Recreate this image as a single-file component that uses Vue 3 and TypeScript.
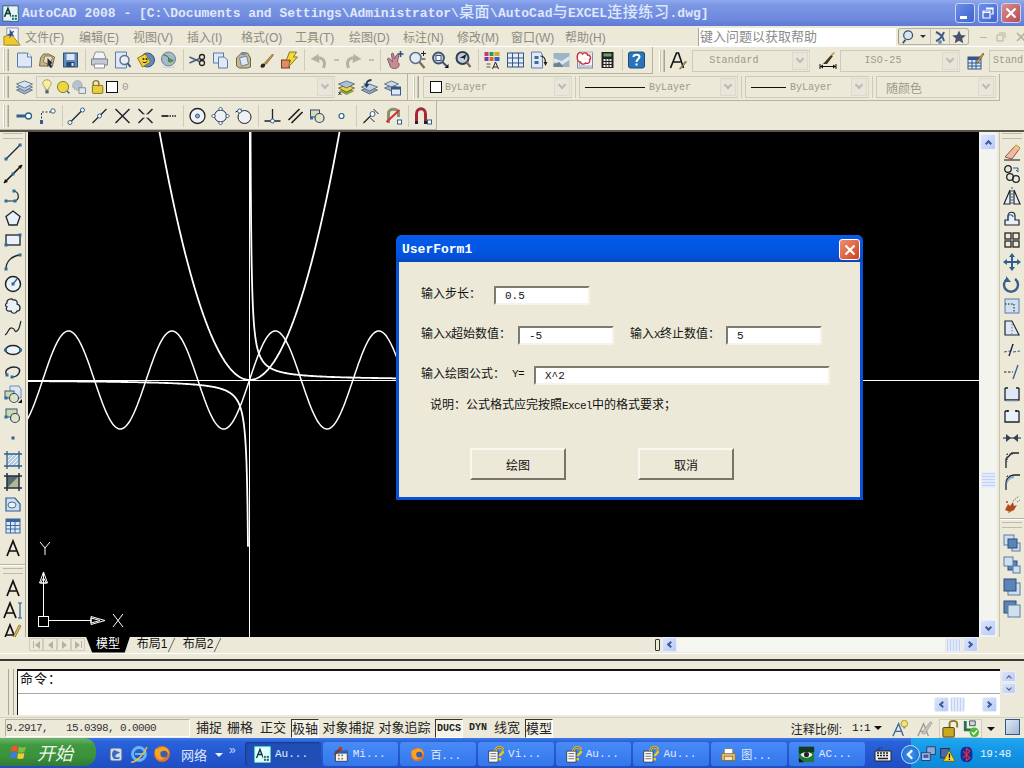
<template>
  <div class="app">
    <!-- 标题栏 -->
    <div class="titlebar">
      <svg class="ico app-ico" viewBox="0 0 20 20" v-html="icons.acad"></svg>
      <div class="title-text">AutoCAD 2008 - [C:\Documents and Settings\Administrator\<span class="cjk">桌面</span>\AutoCad<span class="cjk">与</span>EXCEL<span class="cjk">连接练习</span>.dwg]</div>
      <div class="win-btns">
        <div class="win-btn"><i class="glyph-min"></i></div>
        <div class="win-btn"><svg viewBox="0 0 16 16" width="16" height="16"><path d="M6 3h7v6h-2M3 6h7v7H3zM3 7.500h7M6 4h7" fill="none" stroke="#fff" stroke-width="1.200"/></svg></div>
        <div class="win-btn close"><svg viewBox="0 0 16 16" width="16" height="16"><path d="M3.500 3.500l9 9M12.500 3.500l-9 9" stroke="#fff" stroke-width="2.200"/></svg></div>
      </div>
    </div>

    <!-- 菜单栏 -->
    <div class="menubar">
      <svg class="ico menu-ico" viewBox="0 0 20 20" v-html="icons.docIcon"></svg>
      <span v-for="m in menus" :key="m" class="menu-item">{{ m }}</span>
      <div class="help-box">键入问题以获取帮助</div>
      <div class="help-tools">
        <svg viewBox="0 0 20 18" width="18" height="16"><circle cx="9" cy="7" r="5" fill="#dbe6f2" stroke="#39526f" stroke-width="1.400"/><path d="M6 12l-3 4" stroke="#39526f" stroke-width="2"/></svg>
        <span class="mini-drop"></span>
        <span class="help-div"></span>
        <svg viewBox="0 0 16 16" width="16" height="16"><path d="M4 3c5 2 7 5 8 9M4 12c3-1 6-4 8-9" fill="none" stroke="#3c5a84" stroke-width="2"/><circle cx="8" cy="13" r="2" fill="#7a8fae"/></svg>
        <span class="help-div"></span>
        <svg viewBox="0 0 16 16" width="16" height="16"><path d="M8 1.500l2 4.500 4.800.4-3.600 3.200 1.100 4.700L8 11.800l-4.300 2.500 1.100-4.700L1.200 6.400 6 6z" fill="#46536f"/></svg>
      </div>
      <div class="mdi-btns">
        <span>–</span>
        <svg viewBox="0 0 12 12" width="12" height="12"><path d="M4 2h6v5M2 4h6v6H2z" fill="none" stroke="#b5b2a3"/></svg>
        <svg viewBox="0 0 12 12" width="12" height="12"><path d="M2 2l8 8M10 2l-8 8" stroke="#b5b2a3" stroke-width="1.600"/></svg>
      </div>
    </div>

    <!-- 第一行工具栏 -->
    <div class="tool-row first">
      <div class="toolbar">
        <span class="grip"></span>
        <template v-for="(t, i) in row1" :key="i">
          <span v-if="t === 'sep'" class="sep"></span>
          <span v-else-if="t === 'drop'" class="tool-drop"></span>
          <svg v-else class="ico tool" viewBox="0 0 20 20" v-html="icons[t]"></svg>
        </template>
      </div>
      <div class="toolbar style-bar">
        <span class="grip"></span>
        <svg class="ico tool text-style" viewBox="0 0 20 20" v-html="icons.textStyle"></svg>
        <div class="combo w118 spaced"><span class="combo-label center">Standard</span><span class="combo-btn"></span></div>
        <svg class="ico tool dim" viewBox="0 0 20 20" v-html="icons.dimStyle"></svg>
        <div class="combo w120 spaced"><span class="combo-label center">ISO-25</span><span class="combo-btn"></span></div>
        <svg class="ico tool dim2" viewBox="0 0 20 20" v-html="icons.tableStyle"></svg>
        <div class="combo last"><span class="combo-label">Stand</span></div>
      </div>
    </div>

    <!-- 第二行工具栏 -->
    <div class="tool-row second">
      <div class="toolbar layer-bar">
        <span class="grip"></span>
        <svg class="ico tool" viewBox="0 0 20 20" v-html="icons.layers"></svg>
        <div class="combo layer-combo">
          <svg class="ico layer-ico" viewBox="0 0 20 20" v-html="icons.bulb"></svg>
          <svg class="ico layer-ico" viewBox="0 0 20 20" v-html="icons.sun"></svg>
          <svg class="ico layer-ico" viewBox="0 0 20 20" v-html="icons.freeze"></svg>
          <svg class="ico layer-ico lock" viewBox="0 0 20 20" v-html="icons.padlock"></svg>
          <span class="swatch"></span>
          <span class="combo-label layer-name">0</span>
          <span class="combo-btn"></span>
        </div>
        <svg class="ico tool" viewBox="0 0 20 20" v-html="icons.layerMake"></svg>
        <svg class="ico tool" viewBox="0 0 20 20" v-html="icons.layerPrev"></svg>
        <svg class="ico tool" viewBox="0 0 20 20" v-html="icons.layerState"></svg>
      </div>
      <div class="toolbar prop-bar">
        <span class="grip"></span>
        <div class="combo w149"><span class="swatch small"></span><span class="combo-label">ByLayer</span><span class="combo-btn"></span></div>
        <span class="bar-gap"></span>
        <div class="combo w159"><span class="ltype long"></span><span class="combo-label">ByLayer</span><span class="combo-btn"></span></div>
        <span class="bar-gap"></span>
        <div class="combo w124"><span class="ltype short"></span><span class="combo-label">ByLayer</span><span class="combo-btn"></span></div>
        <span class="bar-gap"></span>
        <div class="combo w120"><span class="combo-label cn">随颜色</span><span class="combo-btn"></span></div>
      </div>
    </div>

    <!-- 第三行工具栏 -->
    <div class="tool-row third">
      <div class="toolbar">
        <span class="grip"></span>
        <template v-for="(t, i) in row3" :key="i">
          <span v-if="t === 'sep'" class="sep"></span>
          <svg v-else class="ico tool" viewBox="0 0 20 20" v-html="icons[t]"></svg>
        </template>
      </div>
    </div>

    <!-- 绘图区 -->
    <div class="main">
      <div class="side left-side">
        <span class="grip-h"></span>
        <svg v-for="t in leftTools" :key="t" class="ico side-tool" viewBox="0 0 20 20" v-html="icons[t]"></svg>
        <span class="side-div"></span>
        <span class="grip-h text-grip"></span>
        <svg v-for="t in textTools" :key="t" class="ico side-tool" viewBox="0 0 20 20" v-html="icons[t]"></svg>
      </div>

      <div class="canvas">
        <svg class="drawing" width="951" height="505" viewBox="0 0 951 505">
          <path d="M0 248.500H951M221.500 0V505" stroke="#fff" fill="none"/>
          <path :d="sinePath" stroke="#fff" stroke-width="1.500" fill="none"/>
          <path :d="squarePath" stroke="#fff" stroke-width="1.800" fill="none"/>
          <path :d="hyperRight" stroke="#fff" stroke-width="1.800" fill="none"/>
          <path :d="hyperLeft" stroke="#fff" stroke-width="1.800" fill="none"/>
          <!-- UCS -->
          <g stroke="#fff" fill="none">
            <rect x="10.500" y="484.500" width="10" height="10"/>
            <path d="M15.500 484V440M21 488.500H63M15.500 440l-4 11h8zM15.500 446l-3 5h6zM63 484.500l14 4-14 4zM63 486l9 2.500-9 2.500z"/>
            <path d="M85 482l10 13M95 482l-10 13M12 410l5 6 5-6M17 416v7"/>
          </g>
        </svg>

        <div class="dialog">
          <div class="dlg-title">
            <span>UserForm1</span>
            <div class="dlg-close"><svg viewBox="0 0 16 16" width="16" height="16"><path d="M3.500 3.500l9 9M12.500 3.500l-9 9" stroke="#fff" stroke-width="2.200"/></svg></div>
          </div>
          <div class="dlg-body">
            <div class="dlg-row r1">
              <label class="l1">输入步长：</label>
              <div class="field w96">0.5</div>
            </div>
            <div class="dlg-row r2">
              <label class="l2">输入<span class="en">X</span>超始数值：</label>
              <div class="field w96">-5</div>
              <label class="l3">输入<span class="en">X</span>终止数值：</label>
              <div class="field w96">5</div>
            </div>
            <div class="dlg-row r3">
              <label class="l4">输入绘图公式：</label>
              <label class="ylab">Y=</label>
              <div class="field w296">X^2</div>
            </div>
            <div class="note">说明：公式格式应完按照<span class="en">Excel</span>中的格式要求；</div>
            <div class="dlg-actions">
              <button class="dlg-btn">绘图</button>
              <button class="dlg-btn">取消</button>
            </div>
          </div>
        </div>
      </div>

      <div class="v-scroll">
        <span class="sb-btn"><i class="chev up"></i></span>
        <span class="sb-thumb-wrap"><span class="sb-thumb"></span></span>
        <span class="sb-btn"><i class="chev down"></i></span>
      </div>

      <div class="side right-side">
        <span class="grip-h"></span>
        <svg v-for="t in modifyTools" :key="t" class="ico side-tool" viewBox="0 0 20 20" v-html="icons[t]"></svg>
        <span class="side-div right-div"></span>
        <span class="grip-h order-grip"></span>
        <svg v-for="t in orderTools" :key="t" class="ico side-tool" viewBox="0 0 20 20" v-html="icons[t]"></svg>
      </div>
    </div>

    <!-- 布局标签 -->
    <div class="tabs-row">
      <div class="tab-nav">
        <span><b></b><i class="tri-l"></i></span>
        <span><i class="tri-l"></i></span>
        <span><i class="tri-r"></i></span>
        <span><i class="tri-r"></i><b></b></span>
      </div>
      <div class="tab active">模型</div>
      <div class="tab">布局1</div>
      <div class="tab">布局2</div>
      <span class="h-split"></span>
      <div class="h-scroll">
        <span class="sb-btn small"><i class="chev left"></i></span>
        <span class="h-track"></span>
        <span class="sb-thumb h"></span>
        <span class="sb-btn small"><i class="chev right"></i></span>
      </div>
    </div>

    <!-- 命令行 -->
    <div class="cmd-area">
      <span class="cmd-grip"></span>
      <div class="cmd-box">
        <div class="cmd-top">命令：</div>
        <div class="cmd-bottom">
          <span class="sb-btn small"><i class="chev left"></i></span>
          <span class="sb-thumb h"></span>
          <span class="cmd-hgap"></span>
          <span class="sb-btn small"><i class="chev right"></i></span>
        </div>
      </div>
      <div class="cmd-vbtns">
        <span class="sb-btn tiny"><i class="chev up"></i></span>
        <span class="sb-btn tiny"><i class="chev down"></i></span>
      </div>
    </div>

    <!-- 状态栏 -->
    <div class="statusbar">
      <div class="coords">9.2917,&nbsp;&nbsp;&nbsp;15.0398,&nbsp;0.0000</div>
      <span v-for="b in statusBtns" :key="b.t" class="st-btn" :class="{ on: b.on, latin: b.latin }" :style="{ width: b.w + 'px', marginLeft: b.m + 'px' }">{{ b.t }}</span>
      <div class="st-right">
        <span class="scale-label">注释比例:</span>
        <span class="scale-val">1:1</span>
        <i class="caret"></i>
        <svg class="ico st-ico vis" viewBox="0 0 20 20" v-html="icons.annoOn"></svg>
        <svg class="ico st-ico auto" viewBox="0 0 20 20" v-html="icons.annoOff"></svg>
        <div class="st-tray">
          <svg class="ico st-ico" viewBox="0 0 20 20" v-html="icons.unlock"></svg>
          <svg class="ico st-ico" viewBox="0 0 20 20" v-html="icons.comm"></svg>
        </div>
        <i class="caret dark"></i>
        <span class="clean-screen"></span>
      </div>
    </div>

    <!-- 任务栏 -->
    <div class="taskbar">
      <div class="start">
        <svg viewBox="0 0 20 20" width="18" height="18"><path d="M2 4c3-2 5-1 7 0l-1 6c-2-1-4-2-7 0z" fill="#e8562a"/><path d="M10 4c2 1 4 2 8 0l-2 6c-3 1-5 1-7 0z" fill="#7fbf3f"/><path d="M1 11c3-2 5-1 7 0l-1 6c-2-1-4-1-7 0z" fill="#3e7de0"/><path d="M9 11c2 1 4 1 7 0l-1 6c-3 1-5 1-7 0z" fill="#f5c92f"/></svg>
        <span>开始</span>
      </div>
      <div class="quick">
        <svg class="ico q" viewBox="0 0 20 20" v-html="icons.qDesk"></svg>
        <svg class="ico q" viewBox="0 0 20 20" v-html="icons.ie"></svg>
        <svg class="ico q" viewBox="0 0 20 20" v-html="icons.firefox"></svg>
        <span class="net">网络</span>
        <i class="net-caret"></i>
        <span class="more">»</span>
      </div>
      <div class="tasks">
        <div v-for="(t, i) in tasks" :key="i" class="task" :class="{ active: t.active }">
          <svg class="ico task-ico" viewBox="0 0 20 20" v-html="icons[t.icon]"></svg>
          <span>{{ t.label }}</span>
        </div>
      </div>
      <svg class="ico kbd" viewBox="0 0 20 20" v-html="icons.keyboard"></svg>
      <div class="tray">
        <span class="tray-chev"><i class="chev left white"></i></span>
        <svg class="ico tray-ico" viewBox="0 0 20 20" v-html="icons.netTray"></svg>
        <svg class="ico tray-ico" viewBox="0 0 20 20" v-html="icons.warnTray"></svg>
        <svg class="ico tray-ico" viewBox="0 0 20 20" v-html="icons.bluetooth"></svg>
        <span class="clock">19:48</span>
      </div>
    </div>
  </div>
</template>

<script setup lang="ts">
const menus = ['文件(F)', '编辑(E)', '视图(V)', '插入(I)', '格式(O)', '工具(T)', '绘图(D)', '标注(N)', '修改(M)', '窗口(W)', '帮助(H)'];

const row1 = ['new', 'open', 'save', 'sep', 'print', 'preview', 'publish', 'globe', 'sep', 'cut', 'copy', 'paste', 'brush', 'blockEdit', 'sep', 'undo', 'drop', 'redo', 'drop', 'sep', 'pan', 'zoomRt', 'zoomWin', 'zoomPrev', 'sep', 'props', 'design', 'sheet', 'markup', 'cloudRed', 'calc', 'sep', 'help'];
const row3 = ['snapFrom', 'snapTrack', 'sep', 'endpoint', 'midpoint', 'inter', 'appInter', 'extension', 'sep', 'center', 'quadrant', 'tangent', 'sep', 'perp', 'parallel', 'insertSnap', 'node', 'sep', 'nearest', 'noSnap', 'sep', 'magnet'];
const leftTools = ['line', 'xline', 'pline', 'polygon', 'rect', 'arc', 'circle', 'revcloud', 'spline', 'ellipse', 'ellipseArc', 'insert', 'block', 'point', 'hatch', 'gradient', 'region', 'table', 'mtext'];
const textTools = ['bigA', 'textA', 'editA', 'abc'];
const modifyTools = ['erase', 'copyObj', 'mirror', 'offset', 'array', 'move', 'rotate', 'scale', 'stretch', 'trim', 'extend', 'breakPt', 'breakObj', 'join', 'chamfer', 'fillet', 'explode'];
const orderTools = ['orderFront', 'orderBack', 'orderAbove', 'orderUnder'];

const statusBtns = [
  { t: '捕捉', w: 28, m: 0 }, { t: '栅格', w: 28, m: 3 }, { t: '正交', w: 28, m: 5 }, { t: '极轴', w: 28, m: 4, on: true },
  { t: '对象捕捉', w: 53, m: 3 }, { t: '对象追踪', w: 53, m: 3 }, { t: 'DUCS', w: 28, m: 4, on: true, latin: true },
  { t: 'DYN', w: 24, m: 3, latin: true }, { t: '线宽', w: 28, m: 3 }, { t: '模型', w: 28, m: 4, on: true },
];

const tasks = [
  { icon: 'acadTask', label: 'Au...', active: true },
  { icon: 'excelTask', label: 'Mi...' },
  { icon: 'firefox', label: '百...' },
  { icon: 'noteHelp', label: 'Vi...' },
  { icon: 'noteHelp', label: 'Au...' },
  { icon: 'noteHelp', label: 'Au...' },
  { icon: 'printTask', label: '图...' },
  { icon: 'eyeTask', label: 'AC...' },
];

// 曲线：原点在 (221.5, 248)
const ox = 221.5;
const oy = 248;

function toPath(pts: number[][]) {
  return 'M' + pts.map((p) => p[0].toFixed(1) + ' ' + p[1].toFixed(1)).join('L');
}
function sample(from: number, to: number, step: number, fn: (x: number) => number) {
  const pts: number[][] = [];
  for (let x = from; x <= to; x += step) pts.push([ox + x, oy - fn(x)]);
  return pts;
}

const sinePath = toPath(sample(-222, 200, 1, (x) => 49 * Math.sin((x * 2 * Math.PI) / 103.4)));
const squarePath = toPath(sample(-92, 92, 1, (x) => 0.0306 * x * x));
const hyperRight = toPath(sample(0.7, 200, 0.3, (x) => 250 / x));
const hyperLeft = toPath(sample(-222, -1.5, 0.5, (x) => 250 / x));

const nd = (x: number, y: number) => `<rect x="${x - 1.5}" y="${y - 1.5}" width="3" height="3" fill="#2b6f9e"/>`;
const dk = '#1d2430';
const bl = '#2e5f8e';
const page = 'fill="#dfe9f5" stroke="#5b7ca8"';
const sq = 'fill="#5b83b5" stroke="#2d4f7c"';
const sq2 = 'fill="#dbe7f3" stroke="#6b8aae"';

const icons: Record<string, string> = {
  acad: `<rect x="1" y="1" width="18" height="18" fill="#e8f2f2" stroke="#1c5d5d"/><path d="M3 14L7 4l4 10M4.500 10h5" fill="none" stroke="#0b3d3d" stroke-width="1.800"/><rect x="11" y="11" width="7" height="7" fill="#0f6d6d" stroke="#fff"/><path d="M14.500 11v7M11 14.500h7" stroke="#fff"/>`,
  acadTask: `<rect x="1" y="1" width="18" height="18" fill="#dff" stroke="#8fd"/><path d="M3 14L7 4l4 10M4.500 10h5" fill="none" stroke="#0b3d3d" stroke-width="1.600"/><rect x="11" y="11" width="7" height="7" fill="#0f6d6d" stroke="#fff"/><path d="M14.500 11v7M11 14.500h7" stroke="#fff"/>`,
  docIcon: `<path d="M4 1h12v18H4z" fill="#f4f6fb" stroke="#8a93a8"/><path d="M1 19V10l8-2 9 11z" fill="#f1c92e" stroke="#a88a12"/><path d="M7 2l2 3 3-1-2 3 2 3-3-1-2 3V9L4 8l3-1z" fill="#2c4f9a"/>`,
  new: `<path d="M3 3h10l4 4v10H3z" ${page}/><path d="M13 3v4h4" fill="#fff" stroke="#5b7ca8"/>`,
  open: `<path d="M2 16l1-8 3-4h5l6 3-2 9z" fill="#c9b48a" stroke="#7a6a48"/><path d="M7 6h6l2 2-3 7-6-3z" fill="#e9dfc2" stroke="#8a7a58"/><path d="M10 8l5 5-2 1 2 3-2 1-2-3-1 2z" fill="#23303f"/>`,
  save: `<rect x="3" y="3" width="14" height="14" fill="#5f8ab9" stroke="#2e5482"/><rect x="6" y="4" width="8" height="6" fill="#dce8f5"/><rect x="6" y="12" width="8" height="5" fill="#24456f"/><rect x="11" y="13" width="2" height="3" fill="#dce8f5"/>`,
  print: `<path d="M6 2h8l2 5v2H4V7z" fill="#f2f3f6" stroke="#8a909c"/><path d="M2 9h16v6H2z" fill="#c5c9d2" stroke="#7c828e"/><path d="M5 14h10v4H5z" fill="#fff" stroke="#8a909c"/>`,
  preview: `<path d="M3 2h11v16H3z" ${page}/><circle cx="12" cy="10" r="4.500" fill="#e9eef6" stroke="#5a6f8e" stroke-width="1.400"/><path d="M15 13l3 4" stroke="#3d5372" stroke-width="2"/>`,
  publish: `<circle cx="12" cy="10" r="7" fill="#5f8ab9" stroke="#2e5482"/><path d="M2 8l8-4 5 8-8 5z" fill="#f2d33a" stroke="#8a7512"/><circle cx="8" cy="9" r="1" fill="#222"/><circle cx="11" cy="9" r="1" fill="#222"/><path d="M7 12c2 1 3 1 5-1" stroke="#222" fill="none"/>`,
  globe: `<circle cx="10" cy="9" r="7" fill="#a9b8c9" stroke="#6f8095"/><path d="M5 5c3 0 6 2 5 5s4 2 5 0" fill="#4f9a50" stroke="#3d7a40"/><path d="M3 15c5 3 10 3 14 0l-2 3H5z" fill="#cfd4da"/>`,
  cut: `<circle cx="14.500" cy="7" r="2.500" fill="none" stroke="#222" stroke-width="1.300"/><circle cx="14.500" cy="13" r="2.500" fill="none" stroke="#222" stroke-width="1.300"/><path d="M2 7l10 4.500M2 13l10-4.500" stroke="#4a5f78" stroke-width="1.500"/>`,
  copy: `<rect x="3" y="3" width="10" height="10" ${page}/><path d="M8 7h6l3 3v8H8z" ${page}/>`,
  paste: `<path d="M3 8l5-5h6l3 5v9l-3 1H6l-3-2z" fill="#c4b98f" stroke="#6d6445"/><path d="M6 8l7-2 2 8-7 2z" fill="#dfe9f5" stroke="#6a85a8"/><rect x="8" y="2" width="4" height="3" fill="#6d8aa6"/>`,
  brush: `<path d="M4 17c0-4 3-4 5-3l-1 3c-1 1-3 1-4 0z" fill="#2d2416"/><path d="M8 13l8-9 1 1-7 9z" fill="#c99644" stroke="#6e5220" stroke-width=".6"/>`,
  blockEdit: `<rect x="2" y="10" width="8" height="8" fill="#e08a68" stroke="#7a3a20"/><path d="M10 2h7l-3 5h4l-9 10 2-7H7z" fill="#f5d93a" stroke="#8a7a18"/>`,
  undo: `<path d="M15 18c3-8-2-12-8-9" fill="none" stroke="#b5b2a3" stroke-width="3"/><path d="M2 9l8-5 1 9z" fill="#b5b2a3"/>`,
  redo: `<path d="M5 18c-3-8 2-12 8-9" fill="none" stroke="#b5b2a3" stroke-width="3"/><path d="M18 9l-8-5-1 9z" fill="#b5b2a3"/>`,
  pan: `<path d="M3 9c1-2 3 0 5 3l-1-8c0-1 2-1 2 0l1 5 2-4c1-1 2 0 2 1l-1 6c2 1 2 3 1 5-2 2-6 2-8 0z" fill="#c98a96" stroke="#7a5a66"/><path d="M16 1v6M13 4h6" stroke="#2a4f80" stroke-width="1.600"/>`,
  zoomRt: `<circle cx="8" cy="8" r="5.500" fill="#e2eaf4" stroke="#5a6f8e" stroke-width="1.500"/><path d="M12 12l5 6" stroke="#7a6a48" stroke-width="2.200"/><path d="M16 1v5M13.500 3.500h5M14 9h4" stroke="#222"/>`,
  zoomWin: `<circle cx="8" cy="8" r="5.500" fill="#c8d4e2" stroke="#3d5372" stroke-width="1.800"/><rect x="5.500" y="5.500" width="5" height="5" fill="#fff" stroke="#3d5372"/><path d="M12 12l4 4" stroke="#3d5372" stroke-width="2"/><path d="M14 18h4v-4z" fill="#111"/>`,
  zoomPrev: `<circle cx="9" cy="8" r="6" fill="#c3ccd8" stroke="#2e3f58" stroke-width="2"/><path d="M6 8l7-4-2 6-1-2z" fill="#222"/><path d="M13 12l4 5" stroke="#7a6a48" stroke-width="2.200"/>`,
  props: `<rect x="2" y="2" width="4" height="4" fill="#d22f8a"/><rect x="7" y="2" width="4" height="4" fill="#22a050"/><rect x="12" y="2" width="5" height="4" fill="#d2a82f"/><rect x="2" y="7" width="4" height="4" fill="#6f3fa8"/><rect x="7" y="7" width="4" height="4" fill="#e2622f"/><rect x="12" y="7" width="5" height="4" fill="#2f5fd2"/><path d="M4 14h4M4 17h4" stroke="#555"/><path d="M10 19l3-7 3 7M11 17h4" fill="none" stroke="#222"/>`,
  design: `<rect x="2" y="3" width="16" height="14" fill="#e4ecf6" stroke="#33578a"/><path d="M7 3v14M13 3v14M2 8h16M2 13h16" stroke="#33578a"/>`,
  sheet: `<path d="M3 2h9l2 3v13H3z" ${page}/><path d="M6 6h4v3H6zM6 11h4v3H6z" fill="#41699b"/><path d="M12 6c4 0 5 3 5 7" fill="none" stroke="#222" stroke-width="1.200"/><path d="M15 12h4l-2 4z" fill="#222"/>`,
  markup: `<rect x="2" y="3" width="16" height="14" fill="#9fb3c4"/><path d="M2 8l8 3 8-5v4l-8 5-8-3z" fill="#dfe7ee"/><path d="M2 14l6-2 4 5H2z" fill="#6a8296"/>`,
  cloudRed: `<rect x="3" y="4" width="15" height="14" fill="#dfe5ee" stroke="#7e8da2"/><rect x="5" y="2" width="13" height="14" fill="#fff" stroke="#7e8da2" opacity=".6"/><path d="M3 5c1-3 4-3 5-1 2-2 5-1 5 1 3 0 4 3 2 5 1 3-2 4-4 3-2 2-5 1-5-1-3 0-4-4-3-7z" fill="#fff" stroke="#cf2a3c" stroke-width="1.400"/>`,
  calc: `<rect x="4" y="2" width="12" height="16" fill="#222"/><rect x="6" y="3.500" width="8" height="3" fill="#6aa06a"/><path d="M6 9h2v2H6zM9 9h2v2H9zM12 9h2v2h-2zM6 12h2v2H6zM9 12h2v2H9zM12 12h2v2h-2zM6 15h2v2H6zM9 15h2v2H9zM12 15h2v2h-2z" fill="#eee"/>`,
  help: `<rect x="2" y="2" width="16" height="16" rx="2" fill="#2b74b8" stroke="#1a4a80"/><path d="M7 7c0-3 6-3 6 0 0 2-3 2-3 5" fill="none" stroke="#fff" stroke-width="2"/><rect x="9" y="13.500" width="2" height="2" fill="#fff"/>`,
  textStyle: `<path d="M2 17L8 2h2l5 15M5 11h7" fill="none" stroke="#111" stroke-width="1.600"/><path d="M11 18l6-8 1 1-6 7z" fill="#c9a148" stroke="#5d4a1c" stroke-width=".6"/>`,
  dimStyle: `<path d="M2 13v5M18 13v5M2 15.500h16" stroke="#111"/><path d="M2 15.500l3-2v4zM18 15.500l-3-2v4z" fill="#111"/><path d="M5 13l8-9 2 1-6 8z" fill="#44371c"/><path d="M13 3l3-2 1 1-3 3z" fill="#c9a148"/>`,
  tableStyle: `<rect x="2" y="6" width="13" height="12" fill="#dfe9f5" stroke="#33578a"/><rect x="2" y="6" width="13" height="3" fill="#33578a"/><path d="M6 9v9M10 9v9M2 12h13M2 15h13" stroke="#33578a"/><path d="M10 11l7-9 1 1-6 9z" fill="#c9a148" stroke="#5d4a1c" stroke-width=".6"/>`,
  layers: `<path d="M10 10l8 3-8 4-8-4z" fill="#9fb0c4" stroke="#6b7d94"/><path d="M10 7l8 3-8 4-8-4z" fill="#b9c8d9" stroke="#6b7d94"/><path d="M10 4l8 3-8 4-8-4z" fill="#dae4ef" stroke="#6b7d94"/>`,
  bulb: `<path d="M10 1c4 0 6 3 5 6-1 2-3 3-3 6H8c0-3-2-4-3-6-1-3 1-6 5-6z" fill="#f7ef9e" stroke="#8f8a50"/><rect x="8" y="14" width="4" height="4" fill="#4a5f78"/>`,
  sun: `<circle cx="10" cy="10" r="7" fill="#ecd83e" stroke="#6b6e20"/><path d="M15 15l3 3" stroke="#4a6a8e" stroke-width="2"/>`,
  freeze: `<circle cx="8" cy="8" r="6" fill="#b5c2cc" stroke="#8a98a4" stroke-dasharray="2 1"/><rect x="10" y="11" width="8" height="7" fill="#dfe7ee" stroke="#6f7f8f"/>`,
  padlock: `<path d="M4 9V5c0-4 7-4 7 0v4" fill="none" stroke="#8e7a20" stroke-width="1.800"/><rect x="3" y="8" width="13" height="10" rx="1" fill="#e8cf3a" stroke="#6f5f18"/>`,
  layerMake: `<path d="M10 11l8 3-8 4-8-4z" fill="#7fa04a"/><path d="M10 8l8 3-8 4-8-4z" fill="#f1d33a" stroke="#7a6f20"/><path d="M10 4l8 3-8 4-8-4z" fill="#a8c0d8" stroke="#5f7488"/><path d="M2 15l3 3M2 18l2-3" stroke="#222"/>`,
  layerPrev: `<path d="M10 10l8 3-8 4-8-4z" fill="#8fa2b6" stroke="#5f7488"/><path d="M10 7l8 3-8 4-8-4z" fill="#c0cfdd" stroke="#5f7488"/><path d="M12 2c-4 0-6 3-6 5l-2-1 3 5 3-4-2 0c0-2 2-3 4-3z" fill="#1f3c5f"/>`,
  layerState: `<path d="M9 8l7 3-7 3-7-3z" fill="#9fb0c4" stroke="#5f7488"/><path d="M9 4l7 3-7 3-7-3z" fill="#cdd9e5" stroke="#5f7488"/><rect x="9" y="10" width="9" height="8" fill="#dfe9f5" stroke="#33578a"/><rect x="9" y="10" width="9" height="2.500" fill="#33578a"/>`,
  snapFrom: `<path d="M2 10h9" stroke="#2e5f8e" stroke-width="3"/><circle cx="14" cy="10" r="3" fill="#fff" stroke="#2e5f8e" stroke-width="1.300"/>`,
  snapTrack: `<path d="M4 16V6h10" fill="none" stroke="#333" stroke-dasharray="2 1.500"/><rect x="2.500" y="14" width="3" height="4" fill="#2e5f8e"/><circle cx="15.500" cy="5" r="2.200" fill="#fff" stroke="#2e5f8e"/>`,
  endpoint: `<path d="M4 16L15 5" stroke="${dk}" stroke-width="1.300"/><circle cx="3.500" cy="16.500" r="2" fill="#fff" stroke="${bl}"/><circle cx="16" cy="4" r="2" fill="#fff" stroke="${bl}"/>`,
  midpoint: `<path d="M3 17L17 3" stroke="${dk}" stroke-width="1.300"/><circle cx="10" cy="10" r="2" fill="#fff" stroke="${bl}"/>`,
  inter: `<path d="M3 3l14 14M17 3L3 17" stroke="${dk}" stroke-width="1.500"/>`,
  appInter: `<path d="M3 3l5 5M12 12l5 5M17 3l-5 5M8 12l-5 5" stroke="${dk}" stroke-width="1.500"/><path d="M8 8h1M11 8h1M8 12h1M11 12h1" stroke="${dk}"/>`,
  extension: `<path d="M3 10h7" stroke="#222" stroke-width="1.800"/><path d="M11 10h7" stroke="#222" stroke-dasharray="1.500 1" stroke-width="1.400"/>`,
  center: `<circle cx="10" cy="10" r="7.500" fill="#eef2f7" stroke="#222" stroke-width="1.300"/><circle cx="10" cy="10" r="2" fill="#8fb0d0" stroke="#2e5f8e"/>`,
  quadrant: `<circle cx="10" cy="10" r="6" fill="#eef2f7" stroke="#222"/><path d="M10 1l2 2-2 2-2-2zM10 15l2 2-2 2-2-2zM1 10l2-2 2 2-2 2zM15 10l2-2 2 2-2 2z" fill="#fff" stroke="#2e5f8e"/>`,
  tangent: `<circle cx="11" cy="11" r="6.500" fill="#eef2f7" stroke="#222"/><path d="M2 6l6-3" stroke="#222"/><circle cx="6" cy="5" r="2" fill="#fff" stroke="#2e5f8e"/>`,
  perp: `<path d="M2 15h16M10 3v12" stroke="#222" stroke-width="1.300"/><circle cx="10" cy="15" r="2" fill="#fff" stroke="#2e5f8e"/>`,
  parallel: `<path d="M3 14L14 3M6 17L17 6" stroke="#222" stroke-width="1.700"/>`,
  insertSnap: `<rect x="2" y="4" width="9" height="7" fill="#cfe0b8" stroke="#446"/><circle cx="11" cy="12" r="4.500" fill="#d9e6c8" stroke="#446" stroke-width="1.200"/>${nd(3, 12)}`,
  node: `<circle cx="10" cy="10" r="2.500" fill="#fff" stroke="#2e5f8e" stroke-width="1.200"/>`,
  nearest: `<path d="M3 17L14 6" stroke="#222" stroke-width="1.300"/><path d="M10 12l4 4" stroke="#222"/><circle cx="12" cy="8" r="2.500" fill="#fff" stroke="#2e5f8e"/><path d="M13 3l5 5" stroke="#222"/>`,
  noSnap: `<path d="M5 17V7c0-5 10-5 10 0v4" fill="none" stroke="#8a8f70" stroke-width="3"/><path d="M3 16L16 4" stroke="#d22f3a" stroke-width="2"/><rect x="14" y="14" width="4" height="4" fill="#fff" stroke="#2e5f8e"/>`,
  magnet: `<path d="M4 17V8c0-7 9-7 9 0v9" fill="none" stroke="#a52838" stroke-width="3"/><path d="M2.500 15h3v3h-3zM11.500 15h3v3h-3z" fill="#222"/><rect x="15" y="14" width="4" height="4" fill="#fff" stroke="#2e5f8e"/>`,
  line: `<path d="M3 17L17 3" stroke="${dk}" stroke-width="1.300"/>${nd(3, 17)}${nd(17, 3)}`,
  xline: `<path d="M1 19L19 1" stroke="#111" stroke-width="1.600"/><path d="M1 19l1-4 3 3zM19 1l-4 1 3 3z" fill="#111"/>${nd(10, 10)}`,
  pline: `<path d="M2 15h10M11 5c5 1 6 8 1 10" fill="none" stroke="${dk}" stroke-width="1.200"/>${nd(3, 15)}${nd(12, 15)}${nd(11, 5)}`,
  polygon: `<path d="M10 3l7 5.500-3 8.500H6L3 8.500z" fill="#e9f0f8" stroke="${dk}" stroke-width="1.300"/>`,
  rect: `<rect x="3" y="5" width="14" height="10" fill="#e9f0f8" stroke="${dk}" stroke-width="1.300"/>${nd(3, 15)}${nd(17, 5)}`,
  arc: `<path d="M3 17C3 9 9 4 17 3" fill="none" stroke="${dk}" stroke-width="1.300"/>${nd(3, 17)}${nd(17, 3)}`,
  circle: `<circle cx="10" cy="10" r="7.500" fill="#eef3f8" stroke="${dk}" stroke-width="1.500"/><path d="M10 10l4-5" stroke="#2e5f8e" stroke-width="1.300"/>${nd(10, 10)}`,
  revcloud: `<path d="M4 7c-1-4 5-5 6-3 3-1 5 2 4 4 4 1 4 7 0 7-1 3-5 3-6 0-4 1-6-2-4-4-2-1-2-3 0-4z" fill="#e9f0f8" stroke="${dk}" stroke-width="1.200"/>`,
  spline: `<path d="M2 17c4-2 3-8 7-7s2 5 5 3 3-8 4-10" fill="none" stroke="${dk}" stroke-width="1.200"/>`,
  ellipse: `<ellipse cx="10" cy="10" rx="7.500" ry="4.500" fill="#eef3f8" stroke="${dk}" stroke-width="1.500"/>${nd(2.5, 10)}${nd(17.5, 10)}`,
  ellipseArc: `<path d="M4 13C0 8 7 5 11 5s7 2 5 6-5 4-7 4" fill="none" stroke="${dk}" stroke-width="1.400"/>${nd(4, 13)}${nd(9, 15)}`,
  insert: `<path d="M7 2h9l2 3v9H7z" ${sq2}/><rect x="2" y="7" width="9" height="7" fill="#c9dba8" stroke="#33578a"/><circle cx="11" cy="14" r="4.500" fill="#d9e6c8" stroke="#446" stroke-width="1.100"/><path d="M15 19h4v-4z" fill="#111"/>${nd(3, 14)}`,
  block: `<rect x="3" y="3" width="11" height="8" fill="#c9dba8" stroke="#33578a"/><circle cx="12" cy="12" r="4.500" fill="#d9e6c8" stroke="#446" stroke-width="1.200"/>${nd(3, 11)}`,
  point: `<rect x="8.500" y="8.500" width="3" height="3" fill="#2e5f8e"/>`,
  hatch: `<rect x="4" y="4" width="12" height="12" fill="#b6cbe0"/><path d="M4 8l4-4M4 12l8-8M4 16L16 4M8 16l8-8M12 16l4-4" stroke="#fff"/><path d="M1 4h18M1 16h18M4 1v18M16 1v18" stroke="#2e5f8e" stroke-width="1.300"/>`,
  gradient: `<rect x="4" y="4" width="12" height="12" fill="#5a6a74"/><path d="M4 16L16 4v12z" fill="#b2b894"/><path d="M1 4h18M1 16h18M4 1v18M16 1v18" stroke="#23303f" stroke-width="1.500"/>`,
  region: `<path d="M3 4h9l5 6v7H3z" fill="#cfe0f0" stroke="#2e5f8e" stroke-width="1.200"/><ellipse cx="9" cy="11" rx="4" ry="3" fill="#e9f0f8" stroke="#4a6a8a"/>`,
  table: `<rect x="3" y="3" width="14" height="14" fill="#dfe9f5" stroke="#3b66a0"/><rect x="3" y="3" width="14" height="3" fill="#3b66a0"/><path d="M7.500 6v11M12 6v11M3 9.500h14M3 13h14" stroke="#3b66a0"/>`,
  mtext: `<path d="M4 18L10 3l6 15M6 13h8" fill="none" stroke="#111" stroke-width="1.700"/>`,
  bigA: `<path d="M4 18L10 3l6 15M6 13h8" fill="none" stroke="#111" stroke-width="1.700"/>`,
  textA: `<path d="M1 18L7 3l6 15M3 13h8" fill="none" stroke="#111" stroke-width="1.700"/><path d="M15 3h4M15 18h4M17 3v15" stroke="#2e5f8e" stroke-width="1.200"/>`,
  editA: `<path d="M1 18L7 3l6 15M3 13h8" fill="none" stroke="#111" stroke-width="1.600"/><path d="M8 19l8-16 2 1-8 15z" fill="#e0c25a" stroke="#6e5a1c" stroke-width=".7"/>`,
  abc: `<ellipse cx="10" cy="13" rx="9" ry="7" fill="#e4ecf4" stroke="#33506f"/><path d="M6 15l2-6 2 6M12 8v7c2 1 3-3 0-3" fill="none" stroke="#222" stroke-width="1.200"/>`,
  erase: `<path d="M3 15L14 3l4 3-8 11z" fill="#f2b8a0" stroke="#8a5a44"/><path d="M12 5l4 3 2-2-4-3z" fill="#e8cf5a"/><path d="M2 18h16" stroke="#111"/>`,
  copyObj: `<circle cx="6" cy="5" r="3.300" fill="none" stroke="${dk}" stroke-width="1.300"/><circle cx="8" cy="13" r="3.300" fill="none" stroke="${dk}" stroke-width="1.300"/><circle cx="14" cy="15" r="3.300" fill="none" stroke="${dk}" stroke-width="1.300"/><path d="M11 4h5v4M16 8l-2-2" fill="none" stroke="#2e5f8e"/>`,
  mirror: `<path d="M8 4v14H2zM12 4v14h6z" fill="#e9f0f8" stroke="${dk}" stroke-width="1.200"/><path d="M10 1v18" stroke="#2e5f8e" stroke-dasharray="2 1"/>`,
  offset: `<path d="M3 17v-5h3V8c0-5 7-5 7 0v4h4v5z" fill="#e9f0f8" stroke="${dk}" stroke-width="1.200"/><path d="M6 13V9c0-3 5-3 5 0" fill="none" stroke="#2e5f8e" stroke-width="1.200"/>`,
  array: `<rect x="3" y="3" width="6" height="6" fill="none" stroke="#222" stroke-width="1.300"/><rect x="11" y="3" width="6" height="6" fill="none" stroke="#222" stroke-width="1.300"/><rect x="3" y="11" width="6" height="6" fill="none" stroke="#222" stroke-width="1.300"/><rect x="11" y="11" width="6" height="6" fill="none" stroke="#222" stroke-width="1.300"/>`,
  move: `<path d="M10 1l3 4h-2v4h4V7l4 3-4 3v-2h-4v4h2l-3 4-3-4h2v-4H5v2l-4-3 4-3v2h4V5H7z" fill="#2e5f8e"/>`,
  rotate: `<path d="M5 5a7 7 0 1 0 8 0" fill="none" stroke="#3b5f88" stroke-width="2.400"/><path d="M4 2v6h5z" fill="#3b5f88"/>`,
  scale: `<rect x="3" y="3" width="14" height="14" fill="#cfe0f0" stroke="#5b7ca8"/><path d="M3 8h9v9" fill="none" stroke="#111" stroke-dasharray="1.500 1.500"/>`,
  stretch: `<path d="M3 3h7l7 14H3z" fill="#dfe9f5" stroke="${dk}" stroke-width="1.200"/><path d="M10 3v14" stroke="#777" stroke-dasharray="1.500 1.500"/>`,
  trim: `<path d="M2 12l6-1M9 11l2-7M11 12l7-1" stroke="#2e5f8e" stroke-dasharray="3 1.500" fill="none"/><path d="M11 4L7 16" stroke="${dk}" stroke-width="1.300"/>`,
  extend: `<path d="M2 10h9" stroke="#222" stroke-dasharray="2.500 1.500"/><path d="M11 17l5-14" stroke="#2e5f8e" stroke-width="1.300"/>`,
  breakPt: `<path d="M3 4h3M14 4h3M3 4v12h14V4" fill="#dfe9f5" stroke="${dk}" stroke-width="1.300"/><path d="M4 17h12" stroke="#9eb6d0"/>`,
  breakObj: `<path d="M3 5h3M14 5h3M3 5v11h14V5" fill="#e9f0f8" stroke="${dk}" stroke-width="1.300"/><circle cx="6" cy="5" r="1" fill="#111"/><circle cx="14" cy="5" r="1" fill="#111"/>`,
  join: `<path d="M1 10h18" stroke="#222"/><path d="M4 6l5 4-5 4zM16 6l-5 4 5 4z" fill="#2e3f58"/>`,
  chamfer: `<path d="M4 18V9L10 3h7" fill="none" stroke="${dk}" stroke-width="1.300"/><path d="M5 4h7M5 4v8" stroke="#222" stroke-dasharray="1 1.500" stroke-width="1.200"/>`,
  fillet: `<path d="M4 18V11c0-4 4-8 8-8h6" fill="none" stroke="${dk}" stroke-width="1.300"/><path d="M5 11c0-3 3-6 7-6" fill="none" stroke="#7fa8d0" stroke-width="1.800"/><path d="M5 4h4M5 4v4" stroke="#222" stroke-dasharray="1 1.500"/>`,
  explode: `<path d="M3 16l3-6 2 2 3-4 1 4 3-1-3 5-4 2z" fill="#b4481f"/><circle cx="5" cy="8" r="1" fill="#d22f1f"/><circle cx="7" cy="18" r="1" fill="#d2851f"/><path d="M11 7l6-5M15 8l3-2" stroke="#777" stroke-dasharray="1.500 1"/>`,
  orderFront: `<rect x="2" y="2" width="10" height="10" fill="#cfdfee" stroke="#5b7ca8"/><rect x="10" y="10" width="8" height="8" fill="#cfdfee" stroke="#5b7ca8"/><rect x="6" y="6" width="9" height="9" ${sq}/>`,
  orderBack: `<rect x="6" y="6" width="9" height="9" ${sq}/><rect x="2" y="2" width="9" height="9" fill="#cfdfee" stroke="#5b7ca8"/><rect x="11" y="11" width="7" height="7" fill="#cfdfee" stroke="#5b7ca8"/>`,
  orderAbove: `<rect x="6" y="6" width="12" height="12" fill="#cfdfee" stroke="#5b7ca8"/><rect x="2" y="2" width="12" height="12" ${sq}/>`,
  orderUnder: `<rect x="2" y="2" width="12" height="12" ${sq}/><rect x="6" y="6" width="12" height="12" fill="#cfdfee" stroke="#5b7ca8"/>`,
  annoOn: `<path d="M2 18L8 5l5 13M4 13h8" fill="none" stroke="#3b66a0" stroke-width="1.400"/><circle cx="14" cy="5" r="3.500" fill="#f2e56a" stroke="#a89a30"/><rect x="13" y="8" width="2" height="2" fill="#888"/>`,
  annoOff: `<path d="M2 18L8 5l5 13M4 13h8" fill="none" stroke="#9a9a9a" stroke-width="1.400"/><path d="M6 15l9-12 2 1-8 12z" fill="#c6c6bc" stroke="#888" stroke-width=".6"/>`,
  unlock: `<path d="M9 9V5c0-4 8-4 8 0v4" fill="none" stroke="#8e7a20" stroke-width="2"/><rect x="2" y="9" width="12" height="10" rx="1" fill="#c9a820" stroke="#4a3f10"/>`,
  comm: `<path d="M3 2h3v8h8v3H3z" fill="#2f6f4e"/><path d="M9 2h6v5H9z" fill="#cfd8cf" stroke="#456"/><circle cx="14" cy="14" r="5" fill="#4fb83a"/><path d="M11.500 14l2 2 3.500-4" stroke="#fff" stroke-width="1.500" fill="none"/>`,
  qDesk: `<rect x="4" y="4" width="12" height="13" rx="2" fill="#cfdcf0" stroke="#435f8e"/><path d="M8 6a6 6 0 0 0 0 9h5l1-2c-5 1-6-1-3-3s4 0 2-2z" fill="#3a6abf"/>`,
  ie: `<circle cx="10" cy="10" r="6.500" fill="none" stroke="#67b8ef" stroke-width="2.800"/><path d="M6 10h9" stroke="#67b8ef" stroke-width="2"/><path d="M2 18c4 1 13-7 16-15" fill="none" stroke="#f1c232" stroke-width="1.400"/>`,
  firefox: `<circle cx="10" cy="10" r="8" fill="#e2702a"/><circle cx="11" cy="10" r="4.500" fill="#3d5fa8"/><path d="M3 5c2 1 5-2 8-2 4 0 7 4 6 8-1-3-3-5-6-4-3 0-3 3-2 5s4 2 6 0c-2 4-8 5-10 2C3 12 3 8 3 5z" fill="#f5a623"/>`,
  excelTask: `<path d="M4 6h14v12H4z" fill="#f8f6ea" stroke="#333"/><path d="M4 6h14v3H4z" fill="#2f5fa8"/><path d="M7 10h2v2H7zM11 10h2v2h-2zM7 14h2v2H7zM11 14h2v2h-2z" fill="#777"/><path d="M2 10l8-9 2 2-8 8z" fill="#7a3a1a"/><circle cx="10" cy="3" r="2" fill="#d22f1f"/>`,
  noteHelp: `<path d="M2 6h11v13H2z" fill="#fff" stroke="#333"/><path d="M4 9h7M4 12h7M4 15h7" stroke="#555"/><path d="M10 6c0-6 9-6 9 0 0 3-4 3-4 6" fill="none" stroke="#e8c822" stroke-width="3"/><rect x="13.500" y="14" width="3" height="3" fill="#e8c822"/><path d="M10 6c0-6 9-6 9 0" fill="none" stroke="#111" stroke-width=".6"/>`,
  printTask: `<path d="M5 3h10v7H5z" fill="#fff" stroke="#777"/><path d="M2 9h16v8H2z" fill="#e8c57a" stroke="#8a6a2a"/><rect x="5" y="12" width="10" height="5" fill="#f8e6b8" stroke="#8a6a2a"/>`,
  eyeTask: `<rect x="1" y="1" width="18" height="18" fill="#1f7a3a"/><path d="M1 1h18v6L1 9z" fill="#0f3d20"/><path d="M3 10c3-4 11-4 14 0-3 5-11 5-14 0z" fill="#f0f0f0"/><circle cx="10" cy="10" r="3" fill="#222"/><path d="M1 14l6 5H1z" fill="#111"/>`,
  keyboard: `<path d="M2 7h16v10H2z" fill="#eee" stroke="#222"/><path d="M4 9h2M7 9h2M10 9h2M13 9h2M4 11.500h2M7 11.500h2M10 11.500h2M13 11.500h2M5 14.500h10" stroke="#222" stroke-width="1.400"/><path d="M5 6c0-3 3-1 5-3" stroke="#222" fill="none" stroke-dasharray="1 1"/>`,
  netTray: `<rect x="8" y="1" width="10" height="9" fill="#8fa8d8" stroke="#23345f"/><rect x="2" y="8" width="10" height="9" fill="#b6c6e8" stroke="#23345f"/><rect x="4" y="10" width="6" height="4" fill="#3a5ab0"/>`,
  warnTray: `<rect x="2" y="3" width="10" height="11" fill="#4a6aa8" stroke="#223"/><path d="M12 5l7 13H5z" fill="#f5d52f" stroke="#6a5a10"/><rect x="11.500" y="9" width="1.500" height="5" fill="#111"/><rect x="11.500" y="15" width="1.500" height="1.500" fill="#111"/>`,
  bluetooth: `<path d="M10 1c6 0 7 4 7 9s-1 9-7 9-7-4-7-9 1-9 7-9z" fill="#0a2f9e"/><path d="M6 6l8 8-4 3V3l4 3-8 8" fill="none" stroke="#e8283a" stroke-width="1.500"/>`,
};
</script>

<style>
html, body { margin: 0; padding: 0; background: #ece9d8; overflow: hidden; }
</style>

<style scoped>
.app {
  width: 1024px;
  height: 768px;
  display: flex;
  flex-direction: column;
  overflow: hidden;
  background: #ece9d8;
  font-family: "Liberation Sans", "Noto Sans CJK SC", sans-serif;
  font-size: 12px;
  color: #111;
}
.ico { display: block; width: 20px; height: 20px; flex: none; }

/* title */
.titlebar {
  height: 26px;
  flex: none;
  display: flex;
  align-items: center;
  background: linear-gradient(#8fa9ee 0, #7b97e4 20%, #6f8ade 70%, #5f7ad4 100%);
}
.app-ico { width: 17px; height: 17px; margin: 0 3px 0 2px; }
.title-text {
  font-family: "Liberation Mono", "Noto Sans CJK SC", monospace;
  font-weight: 700;
  font-size: 13px;
  color: #dfe8fb;
  white-space: nowrap;
  flex: 1;
  margin-top: -4px;
}
.cjk { font-size: 15px; letter-spacing: 0.6px; font-weight: 500; }
.win-btns { display: flex; gap: 3px; padding-right: 3px; }
.win-btn {
  width: 20px;
  height: 20px;
  border-radius: 3px;
  border: 1px solid #c6d3f2;
  background: linear-gradient(135deg, #6c8fe8, #3d63cf);
  display: flex;
  align-items: center;
  justify-content: center;
  box-sizing: border-box;
}
.win-btn.close { background: linear-gradient(135deg, #d98f8a, #b84a56); }
.glyph-min { width: 7px; height: 3px; background: #fff; margin-top: 9px; margin-right: 4px; }

/* menu */
.menubar {
  height: 19px;
  flex: none;
  display: flex;
  align-items: center;
  border-bottom: 1px solid #fff;
  padding-top: 1px;
  box-sizing: content-box;
}
.menu-ico { width: 19px; height: 19px; margin: 0 3px 0 3px; }
.menu-item { width: 54px; flex: none; color: #8e8d80; white-space: nowrap; font-size: 12px; }
.help-box {
  width: 198px;
  height: 18px;
  margin-left: 79px;
  background: #fff;
  border-left: 1px solid #aca899;
  color: #8a8a8a;
  font-size: 13px;
  line-height: 17px;
  padding-left: 1px;
  box-sizing: border-box;
  flex: none;
}
.help-tools {
  display: flex;
  align-items: center;
  height: 17px;
  border: 1px solid #b5b2a3;
  border-left-color: #999;
  border-radius: 3px;
  margin-left: 2px;
  padding: 0 1px;
  box-sizing: border-box;
  flex: none;
}
.help-div { width: 1px; height: 15px; background: #c5c2b2; margin: 0 1px; flex: none; }
.mini-drop { border: 3px solid transparent; border-top: 3px solid #333; margin: 3px 3px 0 2px; }
.mdi-btns { display: flex; align-items: center; gap: 8px; margin-left: 11px; color: #b5b2a3; }

/* toolbars */
.tool-row { display: flex; flex: none; }
.first { height: 27px; }
.second { height: 27px; }
.third { height: 29px; }
.toolbar {
  display: flex;
  align-items: center;
  border-right: 1px solid #b8b4a2;
  border-bottom: 1px solid #b8b4a2;
  box-sizing: border-box;
  height: 100%;
}
.first .toolbar:first-child { width: 653px; }
.style-bar { flex: 1; border-right: none; border-bottom: none; padding-left: 3px; overflow: hidden; }
.style-bar .grip { margin-right: 2px; }
.layer-bar { width: 408px; }
.prop-bar { width: 592px; padding-left: 2px; }
.third .toolbar { width: 437px; padding-top: 2px; }
.grip {
  width: 6px;
  height: 22px;
  margin: 0 4px 0 3px;
  flex: none;
  border-left: 1px solid #fff;
  border-right: 1px solid #a8a493;
  background: linear-gradient(90deg, #c7c4b4 0 1px, transparent 1px 3px, #c7c4b4 3px);
  box-sizing: border-box;
}
.tool { width: 20px; height: 20px; padding: 0 1.500px; box-sizing: content-box; }
.text-style { margin-right: 2px; }
.tool-drop { width: 12px; flex: none; display: flex; justify-content: center; }
.tool-drop::after { content: ""; width: 5px; height: 2px; background: #c3c0b0; }
.sep { width: 1px; height: 22px; margin: 0 2.500px; background: #cfccbc; flex: none; }

.combo {
  display: flex;
  align-items: center;
  height: 22px;
  box-sizing: border-box;
  border: 1px solid #cdcabb;
  border-right-color: #dbd8ca;
  flex: none;
  padding-left: 5px;
  color: #9b9a8c;
  font-family: "Liberation Mono", "Noto Sans CJK SC", monospace;
  font-size: 10px;
}
.combo-label { flex: 1; white-space: nowrap; }
.combo-label.center { text-align: center; padding-right: 22px; }
.combo-label.cn { font-family: "Liberation Sans", "Noto Sans CJK SC", sans-serif; font-size: 12px; padding-left: 4px; }
.combo-btn {
  width: 16px;
  height: 18px;
  margin-right: 1px;
  flex: none;
  background: #e8e6da;
  border: 1px solid #dcdacb;
  box-sizing: border-box;
  position: relative;
}
.combo-btn::after {
  content: "";
  position: absolute;
  left: 4px;
  top: 3px;
  width: 4px;
  height: 4px;
  border-right: 2px solid #bdbbb0;
  border-bottom: 2px solid #bdbbb0;
  transform: rotate(45deg);
}
.w118 { width: 118px; }
.w120 { width: 120px; }
.last { width: 35px; border-right: none; padding-left: 3px; }
.w149 { width: 149px; padding-left: 6px; }
.w159 { width: 159px; }
.w124 { width: 124px; }
.spaced { letter-spacing: 0.2px; }
.dim { margin-left: 8px; padding: 0; margin-right: 2px; }
.dim2 { margin-left: 6px; margin-right: 3px; padding: 0; }
.bar-gap { width: 6px; height: 22px; flex: none; border-left: 1px solid #cdcabb; margin-left: 3px; margin-right: -2px; box-sizing: border-box; }
.layer-combo { width: 299px; gap: 0; padding-left: 2px; }
.layer-ico { width: 16px; height: 16px; }
.lock { margin-left: 3px; }
.swatch { width: 10px; height: 10px; border: 1px solid #111; background: #fff; flex: none; }
.swatch.small { margin-right: 3px; }
.layer-name { margin-left: 4px; font-size: 11px; }
.ltype { height: 1px; background: #111; flex: none; margin-right: 4px; }
.ltype.long { width: 60px; }
.ltype.short { width: 35px; }

/* main area */
.main {
  flex: none;
  height: 505px;
  display: flex;
  border-top: 2px solid #55534a;
  box-sizing: content-box;
}
.side {
  width: 26px;
  flex: none;
  display: flex;
  flex-direction: column;
  align-items: center;
  gap: 2px;
  overflow: hidden;
  box-sizing: border-box;
}
.left-side { margin-right: 2px; border-right: 1px solid #aca899; padding-top: 1px; }
.right-side { width: 25px; border-left: 1px solid #c7c4b4; padding-top: 1px; margin-left: 2px; }
.grip-h {
  width: 20px;
  height: 6px;
  flex: none;
  margin-bottom: 1px;
  border-top: 1px solid #bdbaa9;
  border-bottom: 1px solid #bdbaa9;
  box-sizing: border-box;
}
.side-div { width: 100%; height: 2px; margin-top: 4px; flex: none; border-top: 1px solid #b5b2a3; border-bottom: 1px solid #fff; box-sizing: border-box; }
.right-div { margin-top: 2px; }
.text-grip { margin-bottom: 2px; }
.order-grip { margin-bottom: 3px; }
.canvas { width: 951px; position: relative; background: #000; flex: none; overflow: hidden; }
.drawing { display: block; }

.dialog {
  position: absolute;
  left: 368px;
  top: 103px;
  width: 467px;
  height: 265px;
  box-sizing: border-box;
  background: #ece9d8;
  border: 3px solid #0b50d8;
  border-top: none;
  border-radius: 6px 6px 0 0;
  display: flex;
  flex-direction: column;
}
.dlg-title {
  height: 27px;
  margin: 0 -3px;
  flex: none;
  border-radius: 6px 6px 0 0;
  background: linear-gradient(#0a5ae8 0, #0058e6 40%, #0550d8 80%, #0a45b8 100%);
  display: flex;
  align-items: center;
  justify-content: space-between;
  padding: 2px 3px 0 6px;
  box-sizing: border-box;
  color: #fff;
  font-family: "Liberation Mono", monospace;
  font-weight: 700;
  font-size: 13px;
}
.dlg-close {
  width: 21px;
  height: 21px;
  box-sizing: border-box;
  border: 1px solid #fff;
  border-radius: 3px;
  background: linear-gradient(135deg, #ee9070, #d0411e);
  display: flex;
  align-items: center;
  justify-content: center;
}
.dlg-body { flex: 1; padding-left: 22px; font-size: 12px; color: #111; }
.dlg-row { display: flex; align-items: flex-start; }
.dlg-row label { white-space: nowrap; display: block; line-height: 16px; flex: none; }
.en { font-family: "Liberation Mono", monospace; font-size: 11px; letter-spacing: -0.6px; }
.r1 { margin-top: 24px; }
.r2 { margin-top: 21px; }
.r3 { margin-top: 21px; }
.l1 { width: 73px; }
.l2 { width: 97px; }
.l3 { width: 96px; margin-left: 16px; }
.l4 { width: 91px; }
.dlg-row .ylab { width: 22px; font-family: "Liberation Mono", monospace; font-size: 11px; letter-spacing: -0.6px; }
.field {
  height: 19px;
  box-sizing: border-box;
  border: 2px solid;
  border-color: #7d7b70 #f6f4ea #f6f4ea #7d7b70;
  background: #fff;
  font-family: "Liberation Mono", monospace;
  font-size: 11px;
  line-height: 17px;
  padding-left: 9px;
  flex: none;
}
.w96 { width: 96px; }
.w296 { width: 296px; }
.note { margin: 12px 0 0 9px; line-height: 16px; white-space: nowrap; }
.dlg-actions { display: flex; gap: 72px; margin: 34px 0 0 49px; }
.dlg-btn {
  width: 96px;
  height: 32px;
  border: 2px solid;
  border-color: #faf8ee #77756a #77756a #faf8ee;
  background: #ece9d8;
  font: 12px "Liberation Sans", "Noto Sans CJK SC", sans-serif;
  color: #111;
  padding: 0;
}

/* scroll bars */
.v-scroll { width: 18px; flex: none; display: flex; flex-direction: column; background: #f4f4ee; align-items: center; padding-top: 2px; box-sizing: border-box; }
.sb-btn {
  width: 16px;
  height: 16px;
  flex: none;
  border-radius: 2px;
  border: 1px solid #e8eefc;
  background: linear-gradient(135deg, #dbe5fb, #b9caf5);
  box-sizing: border-box;
  display: flex;
  align-items: center;
  justify-content: center;
}
.sb-btn.small { width: 15px; height: 15px; }
.sb-btn.tiny { width: 15px; height: 11px; }
.chev { display: block; width: 5px; height: 5px; border-left: 2px solid #3b5a96; border-top: 2px solid #3b5a96; box-sizing: border-box; }
.chev.up { transform: translateY(1px) rotate(45deg); }
.chev.down { transform: translateY(-1px) rotate(225deg); }
.chev.left { transform: translateX(1px) rotate(-45deg); }
.chev.right { transform: translateX(-1px) rotate(135deg); }
.chev.white { border-color: #fff; width: 7px; height: 7px; }
.sb-btn.tiny .chev { width: 4px; height: 4px; border-width: 1px; border-color: #556; }
.sb-thumb-wrap { flex: 1; display: flex; flex-direction: column; justify-content: flex-end; padding-bottom: 132px; }
.sb-thumb {
  display: block;
  width: 15px;
  height: 16px;
  border-radius: 2px;
  border: 1px solid #e8eefc;
  background: repeating-linear-gradient(#c3d1f4 0 1px, #e3eafb 1px 3px);
  box-sizing: border-box;
}
.sb-thumb.h { background: repeating-linear-gradient(90deg, #c3d1f4 0 1px, #e3eafb 1px 3px); height: 14px; flex: none; }
.v-scroll .sb-btn:last-child { margin-bottom: 1px; }

/* tabs */
.tabs-row {
  height: 17px;
  flex: none;
  display: flex;
  align-items: center;
  border-bottom: 1px solid #fff;
  padding: 0 46px 1px 29px;
  margin-bottom: 5px;
  box-sizing: border-box;
}
.tab-nav { display: flex; width: 57px; flex: none; }
.tab-nav span {
  width: 14px;
  height: 13px;
  border: 1px solid #cfccbc;
  box-sizing: border-box;
  display: flex;
  align-items: center;
  justify-content: center;
  gap: 1px;
}
.tab-nav b { width: 1px; height: 7px; background: #b5b2a3; }
.tri-l { border: 4px solid transparent; border-right: 5px solid #b5b2a3; border-left: none; }
.tri-r { border: 4px solid transparent; border-left: 5px solid #b5b2a3; border-right: none; }
.tab {
  width: 46px;
  height: 16px;
  line-height: 15px;
  font-size: 12px;
  white-space: nowrap;
  flex: none;
  text-align: center;
  position: relative;
}
.tab.active {
  background: #000;
  color: #fff;
  width: 44px;
  margin-right: -1px;
  clip-path: polygon(0 0, 100% 0, 88% 100%, 14% 100%);
}
.tab:not(.active)::after {
  content: "";
  position: absolute;
  right: 3px;
  top: 1px;
  width: 1px;
  height: 14px;
  background: #666;
  transform: skewX(-25deg);
}
.h-split { width: 5px; height: 12px; border: 1px solid #333; border-radius: 1px; background: #ece9d8; margin-left: auto; flex: none; box-sizing: border-box; }
.h-scroll { display: flex; align-items: center; margin-left: 2px; }
.h-track { width: 268px; height: 14px; background: #f6f6f1; flex: none; }
.h-scroll .sb-thumb.h { margin: 0 2px 0 1px; width: 15px; }

/* command */
.cmd-area {
  height: 58px;
  flex: none;
  display: flex;
  border-top: 2px solid #3a3a34;
  padding: 8px 0 2px 8px;
  box-sizing: border-box;
}
.cmd-grip { width: 6px; height: 46px; flex: none; border-left: 1px solid #aca899; border-right: 1px solid #aca899; margin-right: 3px; box-sizing: border-box; }
.cmd-box { width: 983px; flex: none; background: #fff; border-top: 2px solid #111; border-left: 1px solid #111; box-sizing: border-box; display: flex; flex-direction: column; }
.cmd-top { height: 23px; flex: none; border-bottom: 1px solid #aaa; font-size: 13px; line-height: 16px; padding-left: 2px; box-sizing: border-box; letter-spacing: 1px; }
.cmd-vbtns { display: flex; flex-direction: column; gap: 1px; margin: 2px 0 0 1px; }
.cmd-bottom { flex: 1; display: flex; justify-content: flex-end; align-items: center; padding-right: 3px; gap: 1px; }
.cmd-bottom .sb-thumb.h { width: 15px; height: 15px; }
.cmd-hgap { width: 15px; flex: none; }

/* status bar */
.statusbar {
  height: 21px;
  flex: none;
  display: flex;
  align-items: center;
  border-top: 1px solid #d4d0c0;
  padding-left: 5px;
  box-sizing: border-box;
  white-space: nowrap;
}
.coords {
  width: 185px;
  height: 18px;
  box-sizing: border-box;
  flex: none;
  border: 1px solid #b5b2a3;
  border-right-color: #fff;
  border-bottom-color: #fff;
  font-family: "Liberation Mono", monospace;
  font-size: 11px;
  letter-spacing: -0.6px;
  line-height: 17px;
  margin-right: 5px;
  color: #333;
}
.st-btn {
  height: 19px;
  box-sizing: border-box;
  flex: none;
  font-size: 13px;
  line-height: 18px;
  text-align: center;
  color: #222;
  overflow: hidden;
}
.st-btn.on { border: 1px solid #333; border-right-color: #fff; border-bottom-color: #fff; background: #f4f3e8; line-height: 17px; }
.st-btn.latin { font-family: "Liberation Mono", monospace; font-size: 10px; font-weight: 700; }
.st-right { margin-left: auto; display: flex; align-items: center; height: 100%; }
.scale-label { font-size: 12px; color: #222; margin-right: 10px; }
.scale-val { font-family: "Liberation Mono", monospace; font-size: 11px; letter-spacing: -0.6px; margin-right: 4px; }
.caret { width: 0; height: 0; border: 4px solid transparent; border-top: 4px solid #111; margin-top: 4px; flex: none; }
.st-ico { width: 19px; height: 19px; }
.vis { margin-left: 9px; }
.auto { margin-left: 6px; }
.st-tray { display: flex; width: 43px; border: 1px solid #d0cdbd; background: #f1efe3; margin-left: 4px; padding: 0 1px; height: 19px; box-sizing: border-box; align-items: center; gap: 1px; }
.caret.dark { margin: 6px 10px 0 5px; }
.clean-screen { width: 15px; height: 16px; border: 1px solid #33578a; background: linear-gradient(135deg, #dfe9f5, #9eb6d0); margin-right: 4px; flex: none; box-sizing: border-box; margin-top: -3px; }

/* task bar */
.taskbar {
  height: 30px;
  flex: none;
  display: flex;
  align-items: center;
  background: linear-gradient(#3f7ae8 0, #2a62da 12%, #2456d0 60%, #1f4ec2 100%);
  color: #e8eefb;
}
.start {
  width: 96px;
  height: 28px;
  flex: none;
  align-self: flex-start;
  box-sizing: border-box;
  padding-left: 10px;
  display: flex;
  align-items: center;
  gap: 9px;
  border-radius: 0 12px 12px 0;
  background: linear-gradient(#6db36d 0, #3f9a3f 25%, #3a8f3c 70%, #2f7a34 100%);
  color: #eef6ea;
  font-style: italic;
  font-size: 18px;
}
.quick { display: flex; align-items: center; width: 149px; flex: none; padding: 2px 0 0 10px; box-sizing: border-box; gap: 3px; }
.q { width: 20px; height: 20px; }
.net { font-size: 13px; margin-left: 6px; color: #dfe7f8; white-space: nowrap; }
.net-caret { border: 4px solid transparent; border-top: 4px solid #eef; margin: 5px 0 0 5px; flex: none; }
.more { font-size: 12px; margin: -8px 0 0 3px; color: #cdd9f3; }
.tasks { display: flex; gap: 2px; flex: none; margin-top: 2px; }
.task {
  width: 75.7px;
  height: 24px;
  flex: none;
  border-radius: 3px;
  box-sizing: border-box;
  padding-left: 9px;
  display: flex;
  align-items: center;
  gap: 4px;
  background: linear-gradient(#4a8bf5 0, #3c80f2 50%, #3577ea 100%);
  font-family: "Liberation Mono", "Noto Sans CJK SC", monospace;
  font-size: 11px;
  color: #e4ecfb;
  white-space: nowrap;
}
.task-ico { width: 17px; height: 17px; }
.task.active { background: #1f4fb6; box-shadow: inset 1px 1px 2px #163a88; }
.kbd { margin: 2px 0 0 8px; }
.tray {
  margin-left: auto;
  width: 113px;
  height: 30px;
  flex: none;
  display: flex;
  align-items: center;
  box-sizing: border-box;
  background: linear-gradient(#22a6ee 0, #1294e4 50%, #0e88d8 100%);
  padding-top: 2px;
}
.tray-chev {
  width: 19px;
  height: 19px;
  border-radius: 50%;
  background: radial-gradient(#3d97ee, #1a63cc);
  border: 1px solid #bfe2fa;
  box-sizing: border-box;
  display: flex;
  align-items: center;
  justify-content: center;
  margin-left: -10px;
  position: relative;
}
.tray-ico { width: 17px; height: 17px; margin-right: 2px; }
.clock { font-family: "Liberation Mono", monospace; font-size: 11px; letter-spacing: -0.4px; color: #e8f4fc; margin-left: 3px; }
</style>
